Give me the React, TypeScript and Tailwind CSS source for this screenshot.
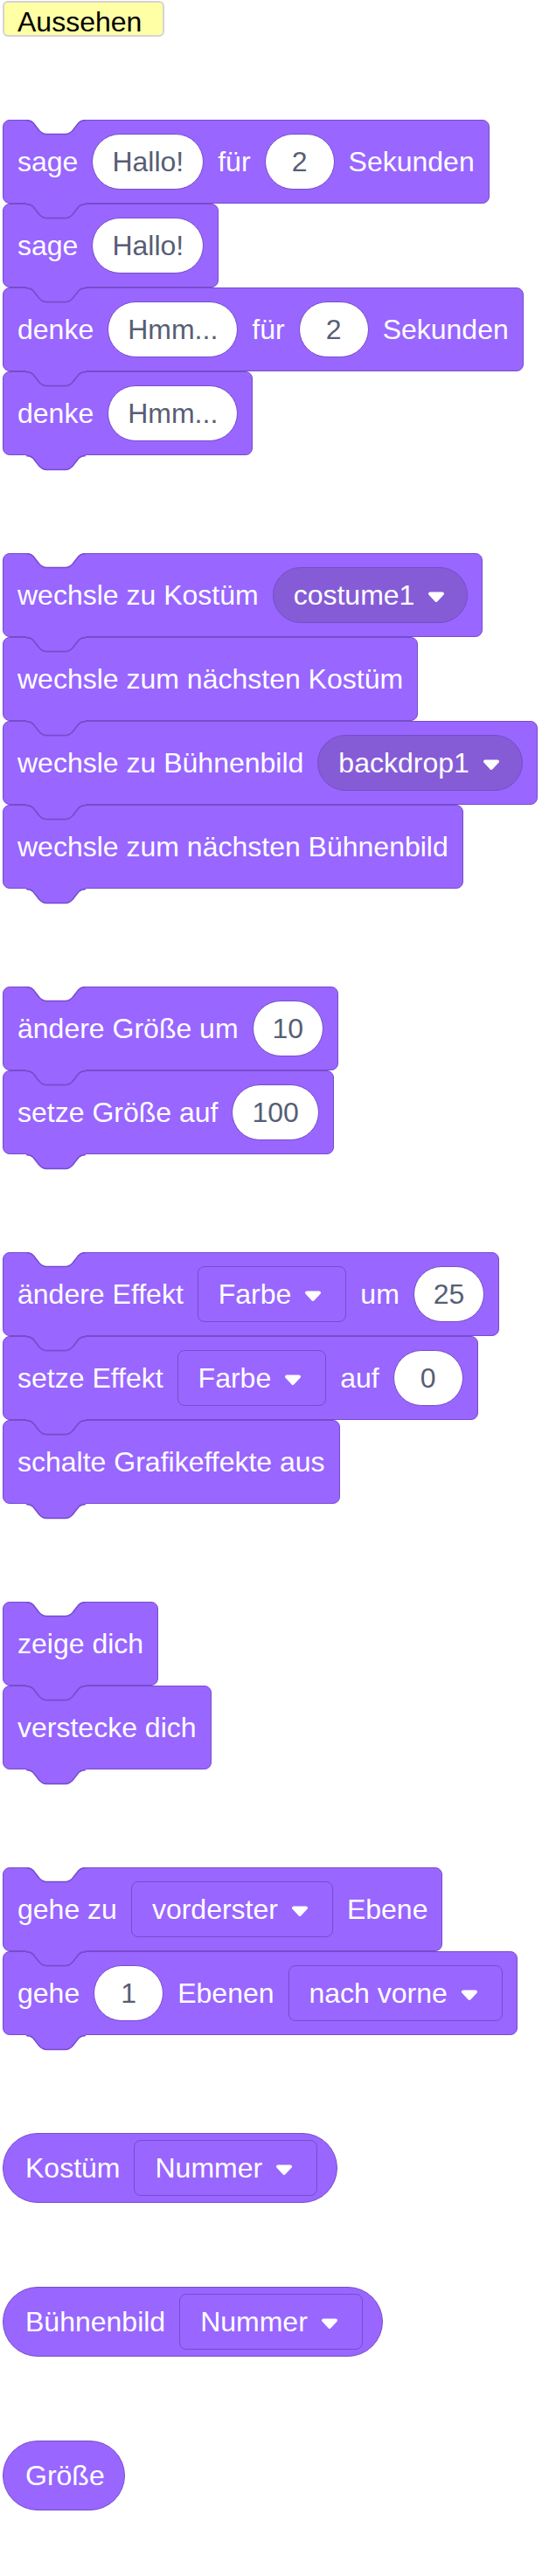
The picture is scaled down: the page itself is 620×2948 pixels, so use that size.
import React from "react"

type Part =
  | string
  | { kind: "input"; value: string }
  | { kind: "menu"; value: string }
  | { kind: "select"; value: string }

const stacks: Part[][][] = [
  [
    ["sage", { kind: "input", value: "Hallo!" }, "für", { kind: "input", value: "2" }, "Sekunden"],
    ["sage", { kind: "input", value: "Hallo!" }],
    ["denke", { kind: "input", value: "Hmm..." }, "für", { kind: "input", value: "2" }, "Sekunden"],
    ["denke", { kind: "input", value: "Hmm..." }],
  ],
  [
    ["wechsle zu Kostüm", { kind: "menu", value: "costume1" }],
    ["wechsle zum nächsten Kostüm"],
    ["wechsle zu Bühnenbild", { kind: "menu", value: "backdrop1" }],
    ["wechsle zum nächsten Bühnenbild"],
  ],
  [
    ["ändere Größe um", { kind: "input", value: "10" }],
    ["setze Größe auf", { kind: "input", value: "100" }],
  ],
  [
    ["ändere Effekt", { kind: "select", value: "Farbe" }, "um", { kind: "input", value: "25" }],
    ["setze Effekt", { kind: "select", value: "Farbe" }, "auf", { kind: "input", value: "0" }],
    ["schalte Grafikeffekte aus"],
  ],
  [["zeige dich"], ["verstecke dich"]],
  [
    ["gehe zu", { kind: "select", value: "vorderster" }, "Ebene"],
    ["gehe", { kind: "input", value: "1" }, "Ebenen", { kind: "select", value: "nach vorne" }],
  ],
]

const reporters: Part[][] = [
  ["Kostüm", { kind: "select", value: "Nummer" }],
  ["Bühnenbild", { kind: "select", value: "Nummer" }],
  ["Größe"],
]

// notch curve, 68px wide and 16px deep
const curve = (y: number) =>
  `M0 ${y} C4 ${y} 6 ${y + 1} 8 ${y + 3} L15 ${y + 12} C17 ${y + 14} 19 ${y + 16} 23 ${y + 16} H45 C49 ${y + 16} 51 ${y + 14} 53 ${y + 12} L60 ${y + 3} C62 ${y + 1} 64 ${y} 68 ${y}`

function Notch() {
  return (
    <svg className="absolute -top-px left-[26px]" width="68" height="19" viewBox="0 0 68 19">
      <path d={`M0 0 L${curve(0.5).slice(1)} L68 0 Z`} fill="#ffffff" />
      <path d={curve(0.5)} fill="none" stroke="#774dcb" strokeWidth="1.5" />
    </svg>
  )
}

function Tab() {
  return (
    <svg className="absolute top-full left-[26px] z-10" width="68" height="20" viewBox="0 0 68 20">
      <path d={`M0 0 L${curve(1.5).slice(1)} L68 0 Z`} fill="#9966ff" />
      <path d={curve(1.5)} fill="none" stroke="#774dcb" strokeWidth="1.5" />
    </svg>
  )
}

function Arrow() {
  return (
    <svg className="translate-y-[2px]" width="22" height="14" viewBox="0 0 22 14">
      <path d="M4 3.5H18L11 11Z" fill="#ffffff" stroke="#ffffff" strokeWidth="4" strokeLinejoin="round" />
    </svg>
  )
}

function Field({ part }: { part: Part }) {
  if (typeof part === "string") {
    return <span className="whitespace-pre">{part}</span>
  }
  if (part.kind === "input") {
    return (
      <div className="flex h-[64px] min-w-[80px] items-center justify-center rounded-full border border-[#774dcb] bg-white px-[22px] text-[#575e75]">
        {part.value}
      </div>
    )
  }
  if (part.kind === "menu") {
    return (
      <div className="flex h-[64px] items-center gap-[14px] rounded-full border border-[#774dcb] bg-[#855cd6] pl-[23px] pr-[24px]">
        <span className="whitespace-pre">{part.value}</span>
        <Arrow />
      </div>
    )
  }
  return (
    <div className="flex h-[64px] items-center gap-[14px] rounded-[8px] border border-[#774dcb] bg-[#9966ff] pl-[23px] pr-[26px]">
      <span className="whitespace-pre">{part.value}</span>
      <Arrow />
    </div>
  )
}

function Block({ parts }: { parts: Part[] }) {
  return (
    <div className="relative flex h-[96px] w-fit items-center gap-[16px] rounded-[8px] border border-[#774dcb] bg-[#9966ff] px-[16px]">
      <Notch />
      {parts.map((p, i) => (
        <Field key={i} part={p} />
      ))}
      <Tab />
    </div>
  )
}

function Reporter({ parts }: { parts: Part[] }) {
  return (
    <div className="flex h-[80px] w-fit items-center gap-[16px] rounded-full border border-[#774dcb] bg-[#9966ff] pl-[25px] pr-[22px]">
      {parts.map((p, i) => (
        <Field key={i} part={p} />
      ))}
    </div>
  )
}

export default function App() {
  return (
    <div className="min-h-screen bg-white pl-[3px] pt-[1px] font-['Liberation_Sans',Arial,sans-serif]">
      <div className="box-border flex h-[41px] w-[185px] items-center rounded-[6px] border-2 border-[#d4d4d4] bg-[#ffffa5] pl-[15px] pt-[7px] text-[32px] text-black">
        Aussehen
      </div>

      <div className="mt-[95px] flex flex-col items-start gap-[96px] pb-[72px] text-[32px] text-white">
        {stacks.map((stack, i) => (
          <div key={i} className="flex flex-col items-start pb-[16px]">
            {stack.map((parts, j) => (
              <Block key={j} parts={parts} />
            ))}
          </div>
        ))}
        {reporters.map((parts, i) => (
          <Reporter key={i} parts={parts} />
        ))}
      </div>
    </div>
  )
}
